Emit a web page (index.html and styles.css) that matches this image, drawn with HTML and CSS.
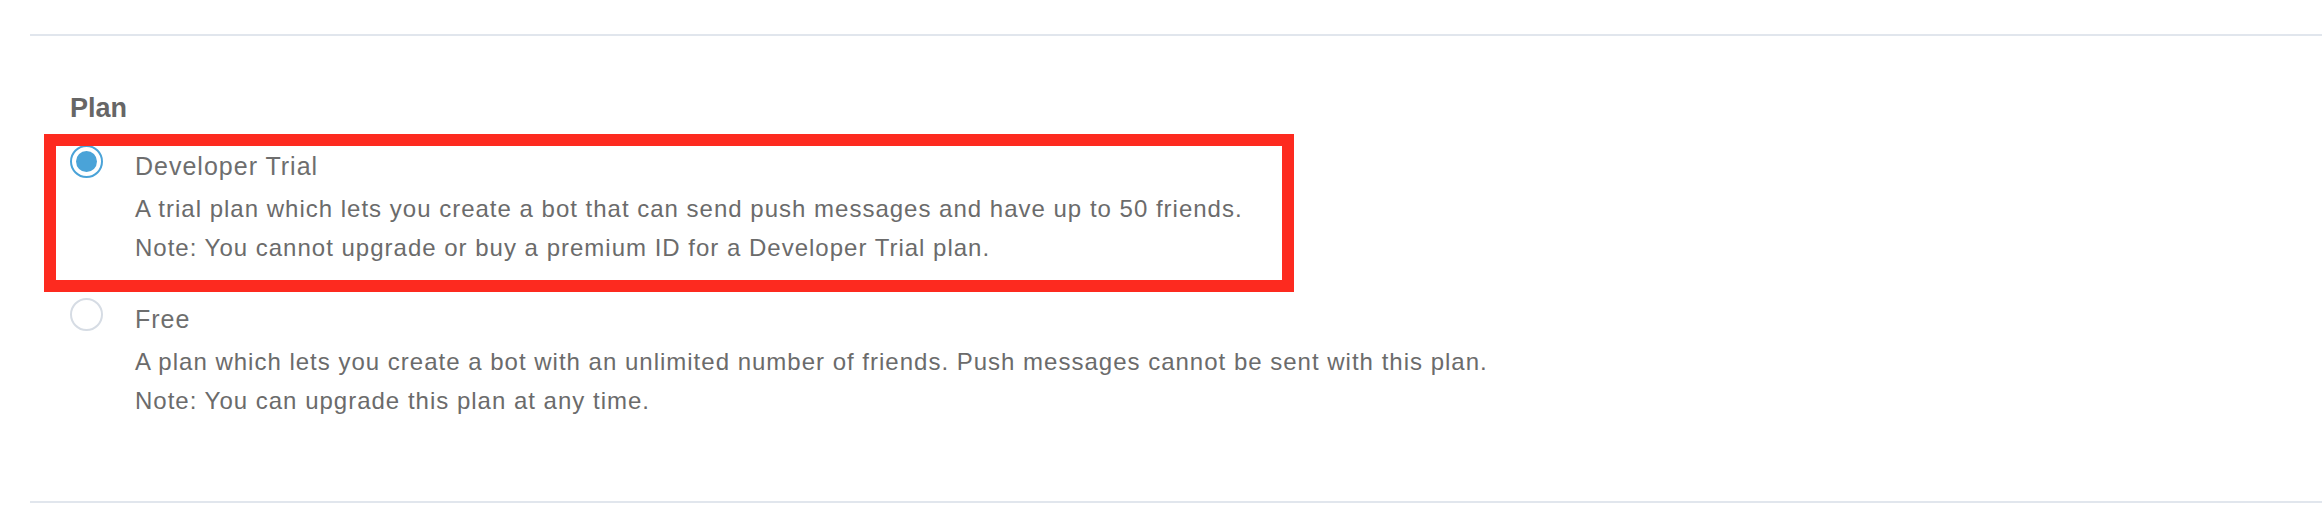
FILE: index.html
```html
<!DOCTYPE html>
<html lang="en">
<head>
<meta charset="utf-8">
<title>Plan</title>
<link rel="stylesheet" href="styles.css">
</head>
<body>
<section class="panel">
  <div class="field">
    <div class="field-label">Plan</div>
    <div class="options">
      <label class="option is-highlighted">
        <span class="radio is-checked"><span class="radio-dot"></span></span>
        <span class="option-text">
          <span class="option-title">Developer Trial</span>
          <span class="option-desc">A trial plan which lets you create a bot that can send push messages and have up to 50 friends.</span>
          <span class="option-desc">Note: You cannot upgrade or buy a premium ID for a Developer Trial plan.</span>
        </span>
        <span class="highlight-box"></span>
      </label>
      <label class="option">
        <span class="radio"></span>
        <span class="option-text">
          <span class="option-title">Free</span>
          <span class="option-desc">A plan which lets you create a bot with an unlimited number of friends. Push messages cannot be sent with this plan.</span>
          <span class="option-desc">Note: You can upgrade this plan at any time.</span>
        </span>
      </label>
    </div>
  </div>
</section>
</body>
</html>
```
FILE: styles.css
```css
html, body {
  margin: 0;
  padding: 0;
  background: #ffffff;
}

body {
  font-family: "Liberation Sans", Arial, Helvetica, sans-serif;
  color: #6b6b6b;
}

.panel {
  margin: 34px 0 0 30px;
  border-top: 2px solid #e1e6ed;
  border-bottom: 2px solid #e1e6ed;
  padding: 56px 0 81px 40px;
}

.field-label {
  font-size: 27px;
  font-weight: bold;
  line-height: 32px;
  color: #666666;
}

.options {
  display: flex;
  flex-direction: column;
  gap: 31px;
  margin-top: 21px;
}

.option {
  position: relative;
  display: grid;
  grid-template-columns: 33px 1fr;
  column-gap: 32px;
  align-items: start;
}

.radio {
  box-sizing: border-box;
  width: 33px;
  height: 33px;
  border-radius: 50%;
  border: 2px solid #d6dce4;
  background: #ffffff;
  display: flex;
  align-items: center;
  justify-content: center;
}

.radio.is-checked {
  border-color: #4aa3d8;
}

.radio-dot {
  width: 21px;
  height: 21px;
  border-radius: 50%;
  background: #4aa3d8;
}

.option-text {
  display: flex;
  flex-direction: column;
  padding-top: 4px;
}

.option-title {
  font-size: 25px;
  letter-spacing: 1px;
  line-height: 34px;
  color: #6e6e6e;
  margin-bottom: 6px;
}

.option-desc {
  font-size: 24px;
  letter-spacing: 1px;
  line-height: 39px;
  color: #6b6b6b;
}

.highlight-box {
  position: absolute;
  left: -26px;
  top: -11px;
  width: 1250px;
  height: 158px;
  box-sizing: border-box;
  border: 12px solid #fd2a1f;
  pointer-events: none;
}
```
